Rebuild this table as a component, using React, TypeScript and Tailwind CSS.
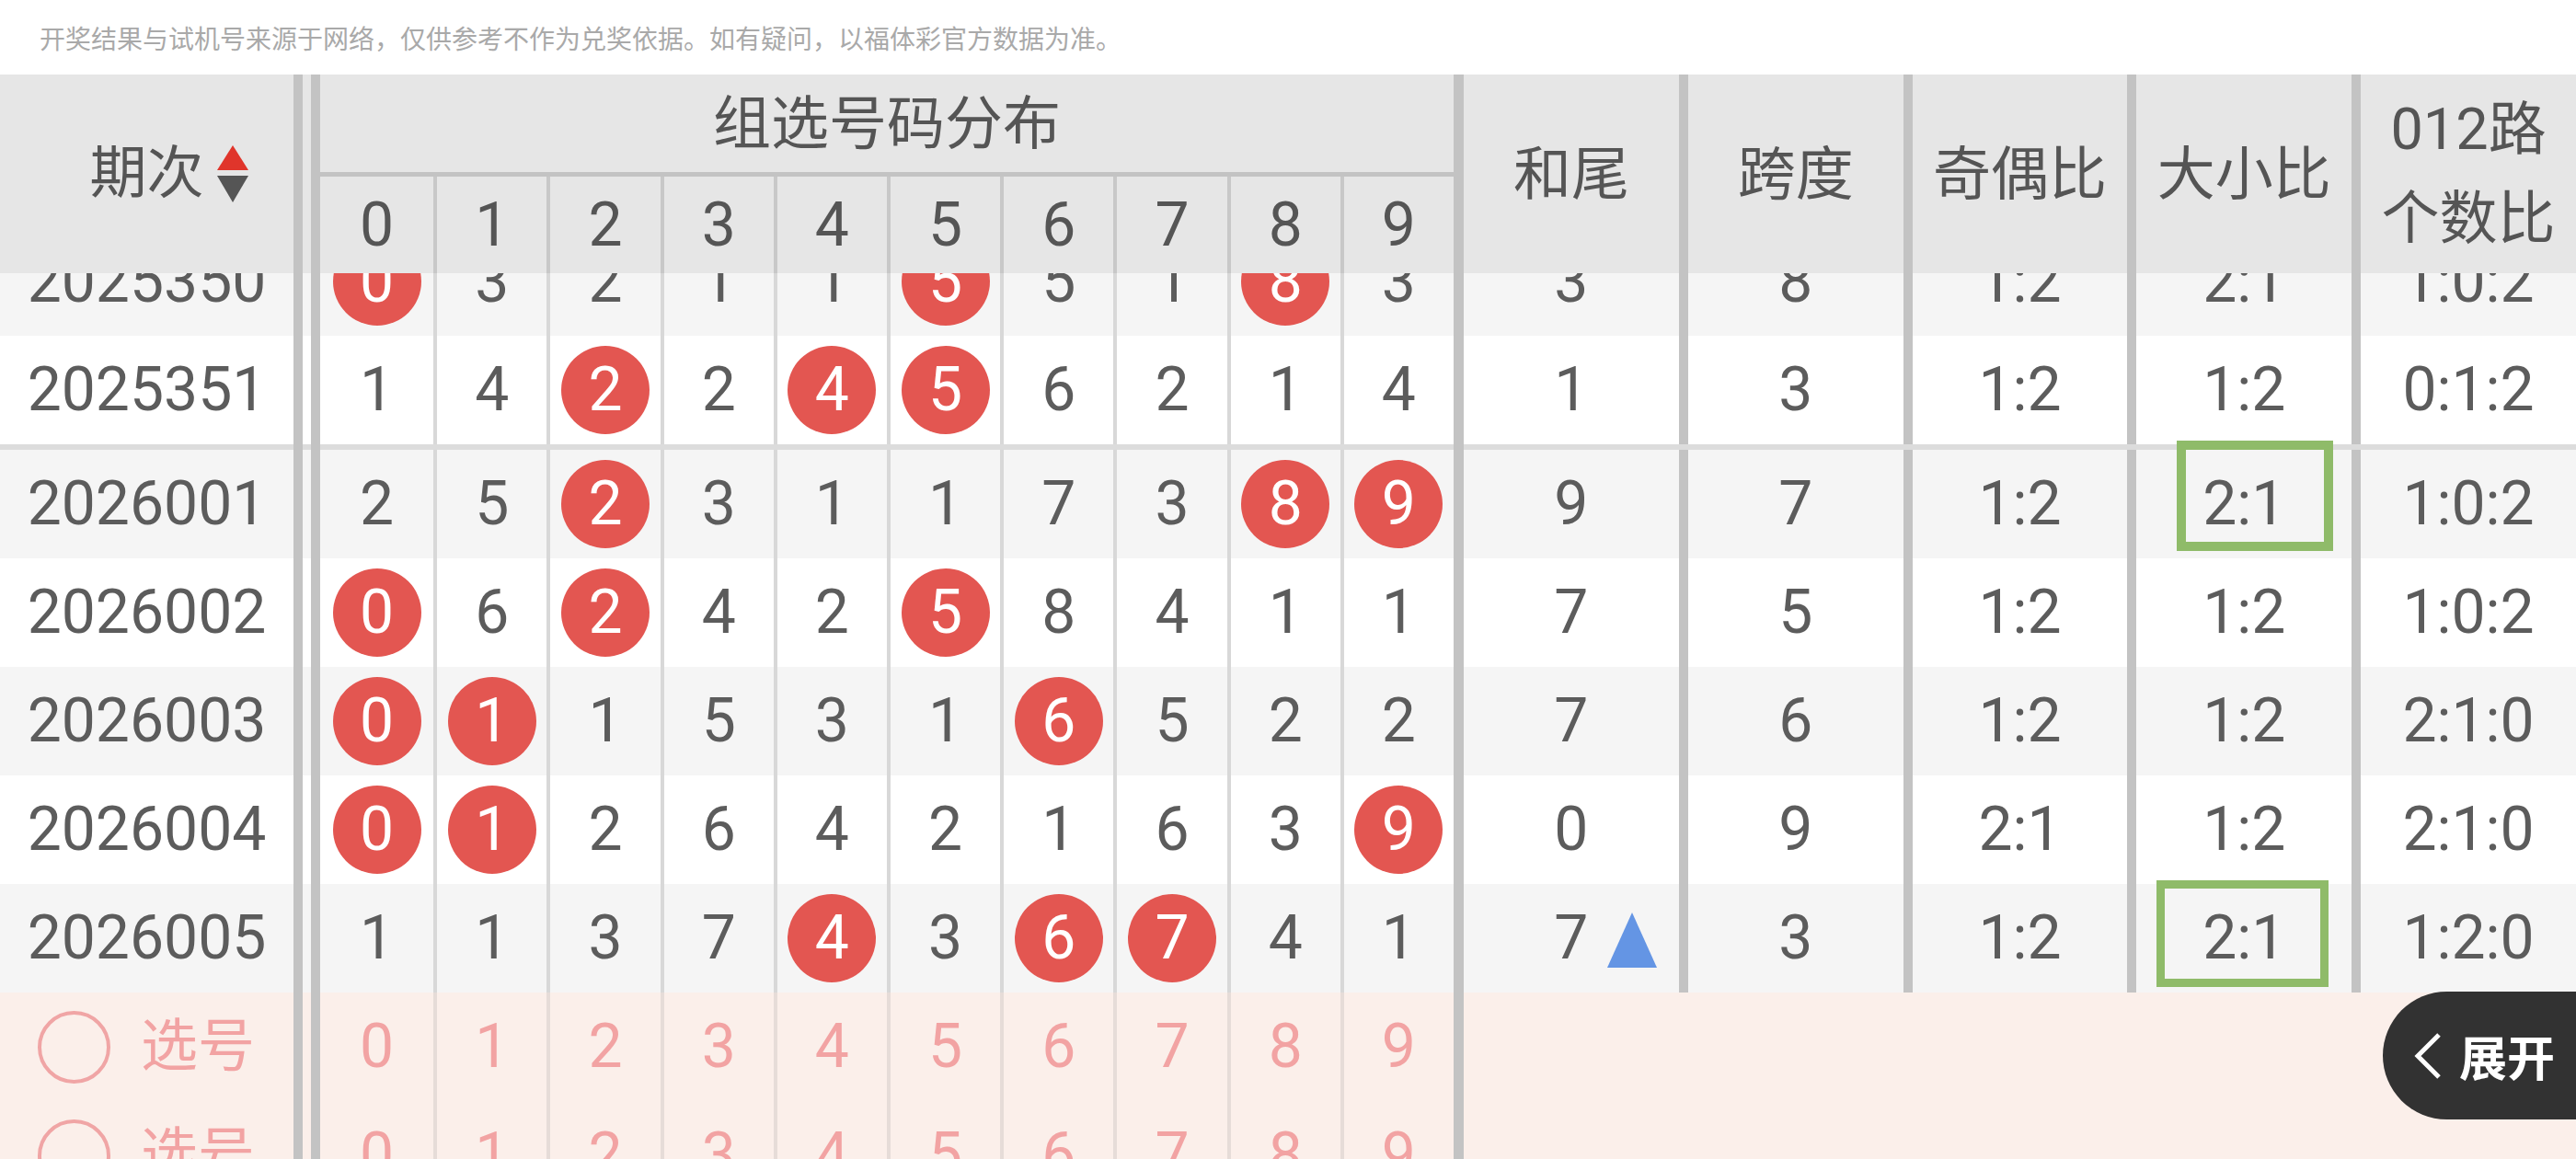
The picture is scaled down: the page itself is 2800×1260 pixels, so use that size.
import React from 'react';

type Row = {
  no: string;
  d: number[];
  hit: number[];
  he: string;
  kua: string;
  jo: string;
  dx: string;
  lu: string;
  box?: 'a' | 'b';
  up?: boolean;
};

const rows: Row[] = [
  { no: '2025350', d: [0, 3, 2, 1, 1, 5, 5, 1, 8, 3], hit: [0, 5, 8], he: '3', kua: '8', jo: '1:2', dx: '2:1', lu: '1:0:2' },
  { no: '2025351', d: [1, 4, 2, 2, 4, 5, 6, 2, 1, 4], hit: [2, 4, 5], he: '1', kua: '3', jo: '1:2', dx: '1:2', lu: '0:1:2' },
  { no: '2026001', d: [2, 5, 2, 3, 1, 1, 7, 3, 8, 9], hit: [2, 8, 9], he: '9', kua: '7', jo: '1:2', dx: '2:1', lu: '1:0:2', box: 'a' },
  { no: '2026002', d: [0, 6, 2, 4, 2, 5, 8, 4, 1, 1], hit: [0, 2, 5], he: '7', kua: '5', jo: '1:2', dx: '1:2', lu: '1:0:2' },
  { no: '2026003', d: [0, 1, 1, 5, 3, 1, 6, 5, 2, 2], hit: [0, 1, 6], he: '7', kua: '6', jo: '1:2', dx: '1:2', lu: '2:1:0' },
  { no: '2026004', d: [0, 1, 2, 6, 4, 2, 1, 6, 3, 9], hit: [0, 1, 9], he: '0', kua: '9', jo: '2:1', dx: '1:2', lu: '2:1:0' },
  { no: '2026005', d: [1, 1, 3, 7, 4, 3, 6, 7, 4, 1], hit: [4, 6, 7], he: '7', kua: '3', jo: '1:2', dx: '2:1', lu: '1:2:0', box: 'b', up: true },
];

const digits = [0, 1, 2, 3, 4, 5, 6, 7, 8, 9];

// one table line: 期次 cell, double rule, ten digit cells, thick rule, right part
const Frame = ({
  className,
  first,
  cells,
  right,
  thin,
}: {
  className: string;
  first?: React.ReactNode;
  cells?: React.ReactNode[];
  right?: React.ReactNode;
  thin: string;
}) => (
  <div className={`flex ${className}`}>
    <div className="w-[329px] shrink-0 border-r-[10px] border-[#c3c3c3] flex items-center">{first}</div>
    <div className="w-[9px] shrink-0" />
    <div className="w-[1253px] shrink-0 border-l-[10px] border-r-[11px] border-[#c3c3c3] grid grid-cols-10">
      {digits.map(i => (
        <div key={i} className={`flex items-center justify-center ${i > 0 ? `border-l-4 ${thin}` : ''}`}>
          {cells ? cells[i] : null}
        </div>
      ))}
    </div>
    <div className="flex-1 flex">{right}</div>
  </div>
);

const Ball = ({ n }: { n: number }) => (
  <span className="w-[96px] h-[96px] rounded-full bg-[#e35651] text-white flex items-center justify-center">{n}</span>
);

const Cell = ({ children, first }: { children: React.ReactNode; first?: boolean }) => (
  <div className={`flex-1 relative flex items-center justify-center ${first ? '' : 'border-l-[10px] border-[#c3c3c3]'}`}>
    {children}
  </div>
);

const DataRow = ({ r, alt }: { r: Row; alt: boolean }) => (
  <Frame
    className={`h-[118px] ${alt ? 'bg-[#f5f5f5]' : 'bg-white'}`}
    thin="border-[#d8d8d8]"
    first={<span className="w-full text-center">{r.no}</span>}
    cells={r.d.map((v, i) => (r.hit.includes(i) ? <Ball key={i} n={i} /> : <span key={i}>{v}</span>))}
    right={
      <>
        <Cell first>
          {r.he}
          {r.up && (
            <svg className="absolute left-[156px] top-[31px]" width="54" height="60" viewBox="0 0 54 60">
              <polygon points="27,0 54,60 0,60" fill="#6495e4" />
            </svg>
          )}
        </Cell>
        <Cell>{r.kua}</Cell>
        <Cell>{r.jo}</Cell>
        <Cell>
          {r.dx}
          {r.box === 'a' && <div className="absolute left-[44px] top-[-10px] w-[170px] h-[120px] border-[10px] border-[#8fbb69]" />}
          {r.box === 'b' && <div className="absolute left-[22px] top-[-4px] w-[187px] h-[116px] border-[9px] border-[#8fbb69]" />}
        </Cell>
        <Cell>{r.lu}</Cell>
      </>
    }
  />
);

const PickRow = () => (
  <Frame
    className="h-[118px] bg-[#fbefea] text-[#f2a3a3]"
    thin="border-[#e6dcd8]"
    first={
      <div className="flex items-center pl-[41px] gap-[33px]">
        <span className="w-[79px] h-[79px] rounded-full border-4 border-[#f0a5a5]" />
        <span className="text-[62px]">选号</span>
      </div>
    }
    cells={digits.map(i => <span key={i}>{i}</span>)}
  />
);

export default function App() {
  return (
    <div className="w-[2800px] h-[1260px] overflow-hidden bg-white flex flex-col font-['Roboto','Noto_Sans_CJK_SC',sans-serif] text-[66px] leading-none text-[#5c5c5c]">
      <div className="h-[81px] shrink-0 flex items-center pl-[43px] text-[28px] text-[#a9a9a9] font-['Noto_Sans_CJK_SC',sans-serif]">
        开奖结果与试机号来源于网络，仅供参考不作为兑奖依据。如有疑问，以福体彩官方数据为准。
      </div>

      {/* header */}
      <div className="h-[216px] shrink-0 bg-[#e6e6e6] flex text-[#555555]">
        <div className="w-[329px] shrink-0 border-r-[10px] border-[#c3c3c3] flex items-center justify-center">
          <span className="relative text-[62px]">
            期次
            <svg className="absolute left-full top-1/2 -translate-y-1/2 ml-[14px]" width="34" height="62" viewBox="0 0 34 62">
              <polygon points="17,0 34,27 0,27" fill="#e0352b" />
              <polygon points="0,33 34,33 17,62" fill="#555555" />
            </svg>
          </span>
        </div>
        <div className="w-[9px] shrink-0" />
        <div className="w-[1253px] shrink-0 border-l-[10px] border-r-[11px] border-[#c3c3c3] flex flex-col">
          <div className="h-[111px] border-b-[5px] border-[#c3c3c3] flex items-center justify-center text-[63px]">组选号码分布</div>
          <div className="flex-1 grid grid-cols-10">
            {digits.map(i => (
              <div key={i} className={`flex items-center justify-center ${i > 0 ? 'border-l-4 border-[#c8c8c8]' : ''}`}>
                {i}
              </div>
            ))}
          </div>
        </div>
        <div className="flex-1 flex text-[63px]">
          <Cell first>和尾</Cell>
          <Cell>跨度</Cell>
          <Cell>奇偶比</Cell>
          <Cell>大小比</Cell>
          <Cell>
            <span className="text-center leading-[97px]">
              012路
              <br />
              个数比
            </span>
          </Cell>
        </div>
      </div>

      {/* body */}
      <div className="flex-1 relative overflow-hidden">
        <div className="mt-[-50px]">
          <DataRow r={rows[0]} alt />
          <DataRow r={rows[1]} alt={false} />
          <Frame className="h-[6px] bg-[#dcdcdc]" thin="border-transparent" />
          {rows.slice(2).map((r, i) => (
            <DataRow key={r.no} r={r} alt={i % 2 === 0} />
          ))}
          <PickRow />
          <PickRow />
        </div>

        <div className="absolute right-0 top-[781px] w-[210px] h-[139px] rounded-l-full bg-[#323232] flex items-center pl-[34px] gap-[19px] text-white">
          <svg width="30" height="50" viewBox="0 0 30 50">
            <polyline points="27,2 4,25 27,48" fill="none" stroke="#ffffff" strokeWidth="5" />
          </svg>
          <span className="text-[52px] font-bold font-['Noto_Sans_CJK_SC',sans-serif]">展开</span>
        </div>
      </div>
    </div>
  );
}
